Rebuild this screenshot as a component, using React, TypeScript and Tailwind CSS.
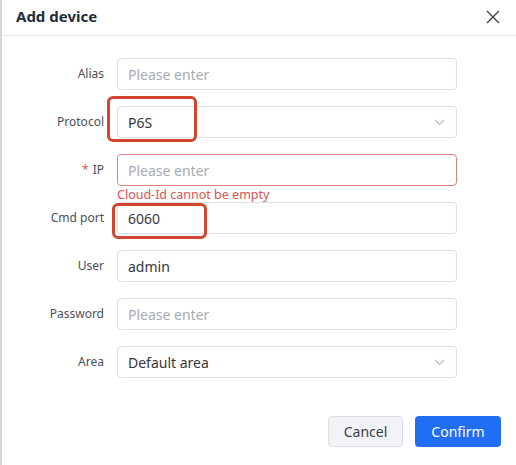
import React from 'react';

const font = { fontFamily: '"Noto Sans", "Open Sans", Arial, sans-serif' };

interface RowProps {
  label: string;
  required?: boolean;
  children: React.ReactNode;
  error?: string;
  highlight?: string;
}

const Row: React.FC<RowProps> = ({ label, required, children, error, highlight }) => (
  <div className="h-[48px] flex items-start">
    <label className="w-[102px] h-8 flex items-center justify-end text-[12px] text-[#4a4f57] shrink-0">
      {required && <span className="text-[#e0504f] mr-1">*</span>}
      {label}
    </label>
    <div className="ml-[13px] w-[340px] relative">
      {children}
      {error && (
        <div className="text-[12.5px] leading-4 text-[#e0504f] pt-[1px]">{error}</div>
      )}
      {highlight && <div className={`absolute border-[3px] border-[#d3452e] rounded-md pointer-events-none ${highlight}`} />}
    </div>
  </div>
);

const Field: React.FC<{ value?: string; placeholder?: string; invalid?: boolean; select?: boolean }> = ({
  value, placeholder, invalid, select,
}) => (
  <div
    className={`h-8 rounded-[4px] border flex items-center px-[10px] text-[14px] bg-white ${
      invalid ? 'border-[#e2807f]' : 'border-[#dcdfe6]'
    }`}
  >
    <span className={`flex-1 ${value ? 'text-[#34373d]' : 'text-[#a8abb2]'}`}>{value || placeholder}</span>
    {select && (
      <svg width="11" height="7" viewBox="0 0 11 7" className="mr-[1px]">
        <path d="M1 1l4.5 4.5L10 1" fill="none" stroke="#b8bcc4" strokeWidth="1.2" />
      </svg>
    )}
  </div>
);

export default function App() {
  return (
    <div className="w-[516px] h-[465px] bg-white border-l-2 border-[#d5d8dd] flex flex-col" style={font}>
      <div className="h-[36px] border-b border-[#e4e7ed] flex items-center justify-between pl-[14px] pr-[16px] pb-[2px] shrink-0">
        <h2 className="text-[15px] font-bold text-[#1f2d3d]">Add device</h2>
        <svg width="14" height="14" viewBox="0 0 14 14">
          <path d="M1 1l12 12M13 1L1 13" stroke="#444" strokeWidth="1.4" />
        </svg>
      </div>

      <div className="pt-[22px] flex flex-col">
        <Row label="Alias">
          <Field placeholder="Please enter" />
        </Row>
        <Row label="Protocol" highlight="-left-[10px] -top-[10px] w-[90px] h-[46px]">
          <Field value="P6S" select />
        </Row>
        <Row label="IP" required error="Cloud-Id cannot be empty">
          <Field placeholder="Please enter" invalid />
        </Row>
        <Row label="Cmd port" highlight="-left-[5px] top-[1px] w-[95px] h-[36px]">
          <Field value="6060" />
        </Row>
        <Row label="User">
          <Field value="admin" />
        </Row>
        <Row label="Password">
          <Field placeholder="Please enter" />
        </Row>
        <Row label="Area">
          <Field value="Default area" select />
        </Row>
      </div>

      <div className="mt-[22px] flex justify-end gap-3 pr-[15px]">
        <button className="w-[75px] h-[31px] rounded-[4px] border border-[#dcdfe6] bg-[#f2f3f6] text-[14px] text-[#3a3f47]">
          Cancel
        </button>
        <button className="w-[86px] h-[31px] rounded-[4px] bg-[#1f6ef4] text-[14px] text-white">
          Confirm
        </button>
      </div>
    </div>
  );
}
